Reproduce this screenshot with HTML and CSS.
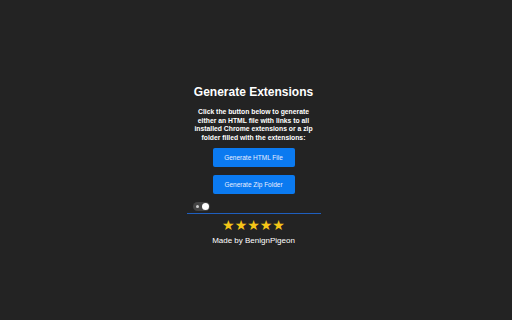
FILE: index.html
```html
<!DOCTYPE html>
<html>
<head>
<meta charset="utf-8">
<link rel="stylesheet" href="styles.css">
</head>
<body>
<div class="page">
  <div class="panel">
    <h1 class="title">Generate Extensions</h1>
    <p class="desc">Click the button below to generate either an HTML file with links to all installed Chrome extensions or a zip folder filled with the extensions:</p>
    <button class="btn">Generate HTML File</button>
    <button class="btn">Generate Zip Folder</button>
    <div class="toggle-row">
      <div class="toggle"><span class="dot-small"></span><span class="knob"></span></div>
    </div>
    <div class="divider"></div>
    <div class="stars">★★★★★</div>
    <div class="credit">Made by BenignPigeon</div>
  </div>
</div>
</body>
</html>
```
FILE: styles.css
```css
html, body {
  margin: 0;
  padding: 0;
  background: #232323;
  width: 512px;
  height: 320px;
  overflow: hidden;
}
.page {
  display: flex;
  justify-content: center;
  padding: 84px 5px 0 0;
  font-family: "Liberation Sans", Arial, sans-serif;
  color: #fff;
}
.panel {
  width: 134px;
  display: flex;
  flex-direction: column;
  align-items: center;
}
.title {
  margin: 0;
  font-size: 12px;
  font-weight: bold;
  line-height: 16px;
}
.desc {
  margin: 8px 0 0;
  font-size: 6.8px;
  line-height: 8.7px;
  font-weight: bold;
  text-align: center;
  width: 126px;
}
.btn {
  margin-top: 5px;
  width: 82px;
  height: 19px;
  border: none;
  border-radius: 2px;
  background: #0b7af0;
  color: #e8eeff;
  font-family: "Liberation Sans", Arial, sans-serif;
  font-size: 6.5px;
  padding: 0;
}
.btn + .btn {
  margin-top: 8px;
}
.toggle-row {
  align-self: stretch;
  display: flex;
  padding-left: 6px;
  margin-top: 8px;
}
.toggle {
  width: 17px;
  height: 9px;
  border-radius: 5px;
  background: #444;
  display: flex;
  align-items: center;
  justify-content: space-between;
  padding: 0 1px 0 3px;
  box-sizing: border-box;
}
.dot-small {
  width: 3px;
  height: 3px;
  border-radius: 50%;
  background: #ccc;
}
.knob {
  width: 7px;
  height: 7px;
  border-radius: 50%;
  background: #fff;
}
.divider {
  align-self: stretch;
  height: 1px;
  background: #1f5fbf;
  margin-top: 2px;
}
.stars {
  margin-top: 3px;
  font-family: "DejaVu Sans", sans-serif;
  font-size: 14px;
  line-height: 16px;
  color: #f5c518;
}
.credit {
  margin-top: 3px;
  font-size: 8px;
  line-height: 10px;
}
```
